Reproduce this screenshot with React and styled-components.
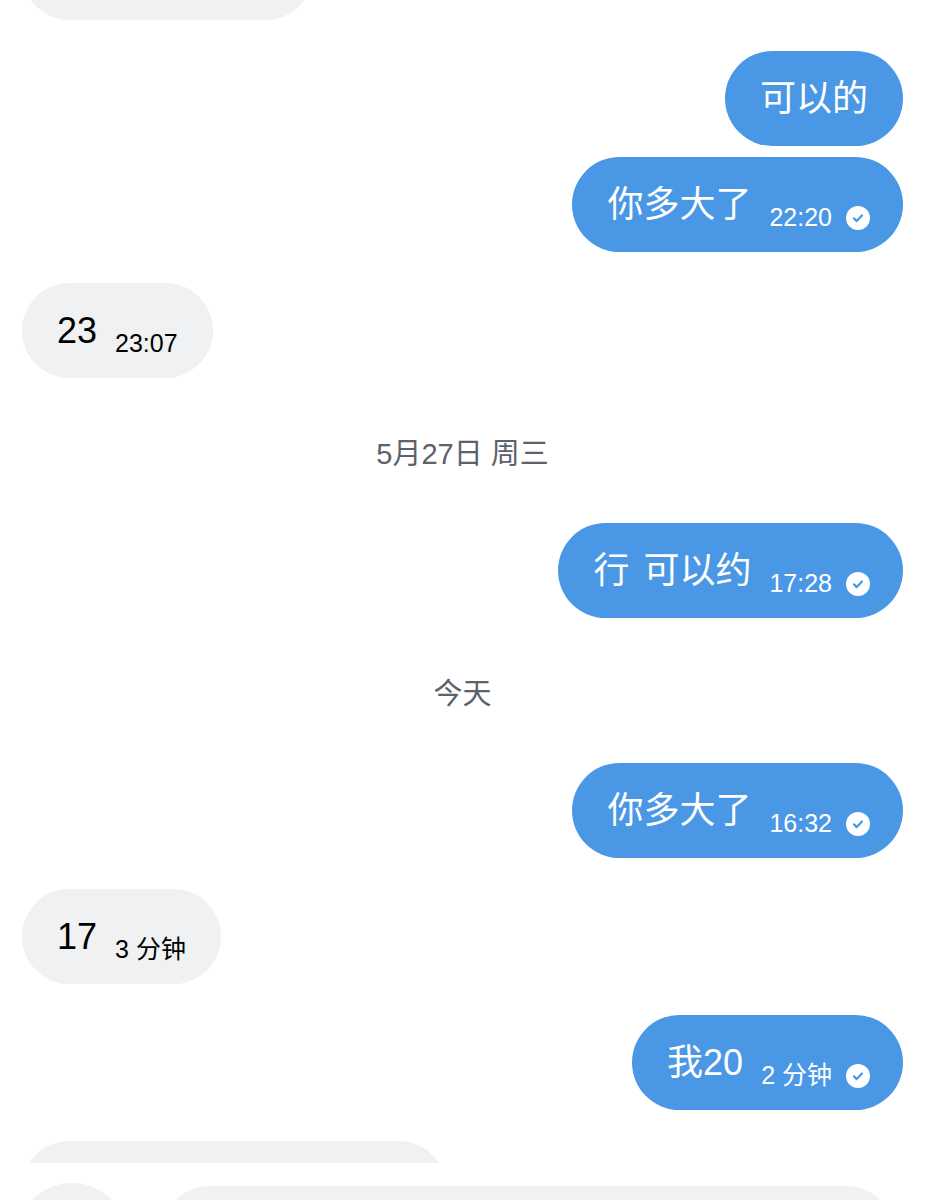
import styled, { createGlobalStyle } from "styled-components";

const GlobalStyle = createGlobalStyle`
  html, body {
    margin: 0;
    padding: 0;
    background: #ffffff;
  }
  body {
    font-family: "Liberation Sans", "Noto Sans CJK SC", sans-serif;
  }
`;

const Page = styled.div`
  width: 925px;
  height: 1200px;
  overflow: hidden;
  display: flex;
  flex-direction: column;
  background: #ffffff;
`;

const Viewport = styled.div`
  height: 1163px;
  flex-shrink: 0;
  overflow: hidden;
`;

// scrolled state: first bubble is partly above the fold
const Feed = styled.div`
  margin-top: -75px;
  padding: 0 22px;
  display: flex;
  flex-direction: column;
  gap: 31px;
`;

const Group = styled.div`
  display: flex;
  flex-direction: column;
  align-items: ${(p) => (p.$out ? "flex-end" : "flex-start")};
  gap: 11px;
`;

const Bubble = styled.div`
  box-sizing: border-box;
  height: 95px;
  width: ${(p) => (p.$w ? `${p.$w}px` : "auto")};
  border-radius: 48px;
  padding: 0 ${(p) => (p.$meta && p.$out ? "33px" : "35px")} 0 35px;
  display: flex;
  align-items: center;
  background: ${(p) => (p.$out ? "#4a98e5" : "#eff1f2")};
  color: ${(p) => (p.$out ? "#ffffff" : "#000000")};
`;

const Text = styled.span`
  font-size: 36px;
  line-height: 1;
  white-space: pre;
  word-spacing: 4px;
`;

const Meta = styled.span`
  display: flex;
  align-items: center;
  gap: 14px;
  margin-left: 18px;
  margin-top: 26px;
  font-size: 25px;
  line-height: 1;
  white-space: pre;
`;

const DayLabel = styled.div`
  height: 83px;
  display: flex;
  align-items: center;
  justify-content: center;
  font-size: 29px;
  color: #5c626b;
`;

const Composer = styled.div`
  flex: 1;
  display: flex;
  align-items: flex-start;
  gap: 36px;
  padding: 20px 32px 0 17px;
  background: #ffffff;
`;

const RoundButton = styled.div`
  width: 110px;
  height: 110px;
  flex-shrink: 0;
  border-radius: 50%;
  background: #eff1f2;
`;

const Input = styled.div`
  flex: 1;
  height: 100px;
  margin-top: 3px;
  border-radius: 46px;
  background: #eff1f2;
`;

const Check = () => (
  <svg width="24" height="24" viewBox="0 0 24 24">
    <circle cx="12" cy="12" r="12" fill="#ffffff" />
    <path
      d="M8 12.4l2.7 2.7 5.3-5.6"
      fill="none"
      stroke="#4a98e5"
      strokeWidth="2.2"
      strokeLinecap="round"
      strokeLinejoin="round"
    />
  </svg>
);

const Message = ({ out, text, time, read, w }) => (
  <Bubble $out={out} $meta={!!time} $w={w}>
    {text && <Text>{text}</Text>}
    {time && (
      <Meta>
        {time}
        {read && <Check />}
      </Meta>
    )}
  </Bubble>
);

const App = () => {
  return (
    <Page>
      <GlobalStyle />
      <Viewport>
        <Feed>
          <Group>
            <Message w={291} />
          </Group>
          <Group $out>
            <Message out text="可以的" />
            <Message out text="你多大了" time="22:20" read />
          </Group>
          <Group>
            <Message text="23" time="23:07" />
          </Group>
          <DayLabel>5月27日 周三</DayLabel>
          <Group $out>
            <Message out text="行 可以约" time="17:28" read />
          </Group>
          <DayLabel>今天</DayLabel>
          <Group $out>
            <Message out text="你多大了" time="16:32" read />
          </Group>
          <Group>
            <Message text="17" time="3 分钟" />
          </Group>
          <Group $out>
            <Message out text="我20" time="2 分钟" read />
          </Group>
          <Group>
            <Message w={424} />
          </Group>
        </Feed>
      </Viewport>
      <Composer>
        <RoundButton />
        <Input />
      </Composer>
    </Page>
  );
};

export default App;
